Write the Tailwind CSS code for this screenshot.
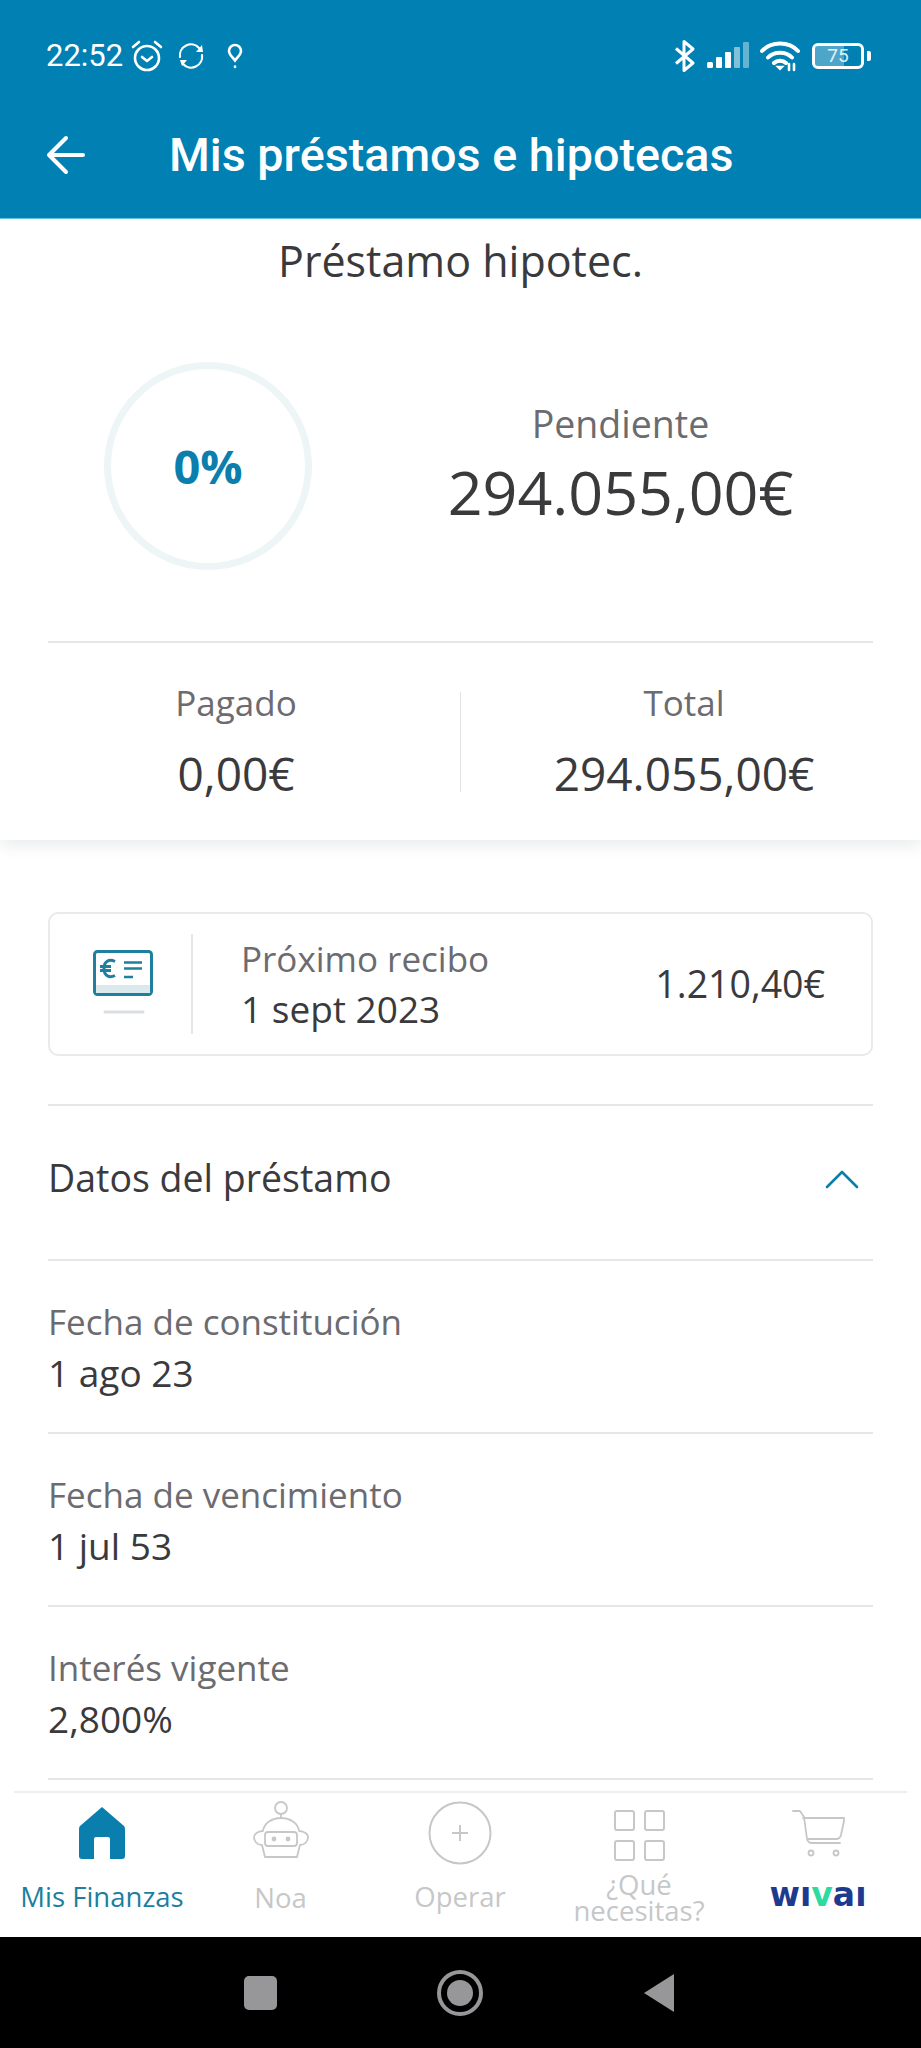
<!DOCTYPE html>
<html lang="es">
<head>
<meta charset="UTF-8">
<meta name="viewport" content="width=device-width, initial-scale=1.0">
<title>Mis préstamos e hipotecas</title>
<script src="https://cdn.jsdelivr.net/npm/@tailwindcss/browser@4"></script>
</head>
<body class="bg-white">
<div class="w-[921px] h-[2048px] flex flex-col overflow-hidden font-['Open_Sans',sans-serif] text-[#3a3a3c]">

  <!-- status bar + title -->
  <header class="h-[219px] shrink-0 bg-[#0080b3] text-white font-['Roboto',sans-serif] border-b border-[#5fc3dc]">
    <div class="h-[112px] pl-[46px] pr-[50px] flex items-center justify-between">
      <div class="flex items-center">
        <span class="text-[31px] w-[84px]">22:52</span>
        <svg class="w-[34px] h-[34px]" viewBox="0 0 34 34" fill="none" stroke="white" stroke-width="2.6" stroke-linecap="round" stroke-linejoin="round"><circle cx="17" cy="19" r="12"/><path d="M12 18l5 4 5-4M3 8l6-5M31 8l-6-5"/></svg>
        <svg class="w-[28px] h-[28px] ml-[13px]" viewBox="0 0 28 28" fill="none" stroke="white" stroke-width="2.2" stroke-linecap="round"><path d="M3 15A11 11 0 0 1 22 6M25 13a11 11 0 0 1-19 9"/><path d="M19 10l7 0-1-7zM3 18l7 0-5 6z" fill="white" stroke="none"/></svg>
        <svg class="w-[18px] h-[26px] ml-[21px]" viewBox="0 0 18 26" fill="none" stroke="white" stroke-width="2.6" stroke-linecap="round"><path d="M9 17.500C6 13.500 3 11.500 3 8a6 6 0 0 1 12 0c0 3.500-3 5.500-6 9.500z"/><path d="M9 23.500v.5"/></svg>
      </div>
      <div class="flex items-center">
        <svg class="w-[22px] h-[34px]" viewBox="0 0 22 34" fill="none" stroke="white" stroke-width="3" stroke-linejoin="round"><path d="M2 9.500 19 24 10 31.500V2.500L19 10 2 24.500"/></svg>
        <svg class="w-[42px] h-[28px] ml-[11px]" viewBox="0 0 42 28" fill="white"><rect x="0" y="20" width="6" height="6" rx="1.500"/><rect x="9" y="15" width="6" height="11" rx="1"/><rect x="18" y="10" width="6" height="16" rx="1"/><rect x="27" y="5" width="6" height="21" rx="1" fill-opacity=".5"/><rect x="36" y="0" width="6" height="26" rx="1" fill-opacity=".4"/></svg>
        <svg class="w-[40px] h-[32px] ml-[11px]" viewBox="0 0 40 32" fill="none" stroke="white" stroke-width="4" stroke-linecap="round"><path d="M2 11C11 1 29 1 38 11M8 17.500C14 11 26 11 32 17.500M14 23c3-3 9-3 12 0"/><path d="M20 29.500l-3-3h6z" fill="white" stroke-width="1.500"/><path d="M29 24v6M34 24v6" stroke-width="2.600"/></svg>
        <div class="relative w-[52px] h-[26px] ml-[12px] border-[3px] border-white rounded-[6px] overflow-hidden">
          <div class="h-full w-[62%] bg-white/30"></div>
          <span class="absolute inset-0 flex items-center justify-center text-[19px] text-white/85">75</span>
        </div>
        <div class="w-[4px] h-[10px] ml-[3px] bg-white rounded-r-[2px]"></div>
      </div>
    </div>
    <div class="h-[106px] pl-[46px] pt-[21px] flex items-start">
      <svg class="w-[40px] h-[40px] mt-[2px]" viewBox="0 0 40 40" fill="none" stroke="white" stroke-width="4" stroke-linecap="round" stroke-linejoin="round"><path d="M37 20H3M20 3 3 20l17 17"/></svg>
      <h1 class="ml-[83px] text-[46.700px] leading-[44px] font-medium whitespace-nowrap">Mis préstamos e hipotecas</h1>
    </div>
  </header>

  <main class="flex-1 min-h-0 overflow-hidden flex flex-col">
    <!-- summary card -->
    <section class="h-[621px] shrink-0 bg-white px-[48px] shadow-[0_6px_14px_rgba(60,80,90,0.10)] relative z-10">
      <h2 class="text-center text-[43px] leading-[54px] pt-[15px] h-[69px]">Préstamo hipotec.</h2>
      <div class="h-[355px] flex border-b-2 border-[#e4e7e9]">
        <div class="w-[320px] flex pl-[56px] pt-[74px]">
          <div class="w-[208px] h-[208px] rounded-full border-[7px] border-[#eef5f7] flex items-center justify-center text-[#0a7fae] font-bold text-[47px]">0%</div>
        </div>
        <div class="flex-1 flex flex-col items-center pt-[112px]">
          <span class="text-[37.500px] leading-[48px] text-[#6b6b70]">Pendiente</span>
          <span class="text-[61px] leading-[84px] mt-[2px]">294.055,00€</span>
        </div>
      </div>
      <div class="flex items-center h-[197px]">
        <div class="w-[412px] pr-[36px] flex flex-col items-center">
          <span class="text-[35px] leading-[46px] text-[#6b6b70]">Pagado</span>
          <span class="text-[46px] leading-[60px] mt-[17px]">0,00€</span>
        </div>
        <div class="w-px h-[100px] bg-[#dfe3e5]"></div>
        <div class="flex-1 pl-[34px] flex flex-col items-center">
          <span class="text-[35px] leading-[46px] text-[#6b6b70]">Total</span>
          <span class="text-[46px] leading-[60px] mt-[17px]">294.055,00€</span>
        </div>
      </div>
    </section>

    <section class="px-[48px] pt-[72px]">
      <!-- next payment -->
      <div class="h-[144px] border-2 border-[#e8eaec] rounded-[10px] flex items-center">
        <div class="w-[143px] h-[100px] flex justify-center items-start border-r-2 border-[#e4e7e9] shrink-0">
          <svg class="w-[60px] h-[80px] mt-[16px] ml-[4px]" viewBox="0 0 60 80" fill="none">
            <rect x="1.500" y="1.500" width="57" height="43" rx="3" fill="white" stroke="#1f7f9f" stroke-width="3"/>
            <rect x="3" y="35" width="54" height="8" fill="#dbe9ec"/>
            <path d="M22 11.500c-6-3-11 0-11 7s5 10 11 7M7 16.500h11M7 20.500h11" stroke="#1f7f9f" stroke-width="3"/>
            <path d="M31 12.500h18M31 18.500h18M31 27h9" stroke="#1f7f9f" stroke-width="2.500"/>
            <path d="M12 62h38" stroke="#dcdfe1" stroke-width="3" stroke-linecap="round"/>
          </svg>
        </div>
        <div class="pl-[48px] flex-1">
          <p class="text-[35px] leading-[46px] text-[#6b6b70]">Próximo recibo</p>
          <p class="text-[37px] leading-[48px] mt-[3px]">1 sept 2023</p>
        </div>
        <span class="text-[37.500px] pr-[46px]">1.210,40€</span>
      </div>

      <div class="mt-[48px] h-[157px] pb-[8px] border-y-2 border-[#e4e7e9] flex items-center justify-between">
        <span class="text-[37.500px]">Datos del préstamo</span>
        <svg class="w-[34px] h-[20px] mr-[14px]" viewBox="0 0 34 20" fill="none" stroke="#0a7fae" stroke-width="2.600" stroke-linecap="round" stroke-linejoin="round"><path d="M2 18 17 3l15 15"/></svg>
      </div>

      <div class="h-[173px] border-b-2 border-[#e4e7e9] pt-[38px]">
        <p class="text-[35px] leading-[46px] text-[#6b6b70]">Fecha de constitución</p>
        <p class="text-[37px] leading-[48px] mt-[4px]">1 ago 23</p>
      </div>
      <div class="h-[173px] border-b-2 border-[#e4e7e9] pt-[38px]">
        <p class="text-[35px] leading-[46px] text-[#6b6b70]">Fecha de vencimiento</p>
        <p class="text-[37px] leading-[48px] mt-[4px]">1 jul 53</p>
      </div>
      <div class="h-[173px] border-b-2 border-[#e4e7e9] pt-[38px]">
        <p class="text-[35px] leading-[46px] text-[#6b6b70]">Interés vigente</p>
        <p class="text-[37px] leading-[48px] mt-[4px]">2,800%</p>
      </div>
    </section>
  </main>

  <!-- bottom nav -->
  <nav class="h-[146px] shrink-0 mx-[14px] border-t-2 border-[#eceeef] flex bg-white text-[#c6c7c9] text-[27.500px] leading-[31px]">
    <div class="w-[176px] flex flex-col items-center pt-[12px]">
      <svg class="w-[46px] h-[52px] mt-[2px]" viewBox="0 0 46 52" fill="#0a7fae"><path d="M23 0 45 19q1 1 1 3v27q0 3-3 3H31V32q0-2-2-2H17q-2 0-2 2v20H3q-3 0-3-3V22q0-2 1-3z"/></svg>
      <span class="mt-[22px] text-[#1b7f9f]">Mis Finanzas</span>
    </div>
    <div class="w-[181px] flex flex-col items-center pt-[8px]">
      <svg class="w-[60px] h-[60px]" viewBox="0 0 60 60" fill="none" stroke="#c6c7c9" stroke-width="1.800" stroke-linejoin="round"><circle cx="30" cy="7" r="6"/><path d="M30 13v5M12 30c1-8 9-13 18-13s17 5 18 13c3 0 9 2 9 6s-3 8-8 8l-3 12H14l-3-12c-5 0-8-4-8-8s6-6 9-6z"/><rect x="14" y="31" width="32" height="14" rx="3"/><circle cx="23" cy="38" r="1.500" fill="#c6c7c9"/><circle cx="37" cy="38" r="1.500" fill="#c6c7c9"/></svg>
      <span class="mt-[21px]">Noa</span>
    </div>
    <div class="w-[178px] flex flex-col items-center pt-[8px]">
      <svg class="w-[64px] h-[64px]" viewBox="0 0 64 64" fill="none" stroke="#c6c7c9" stroke-width="2"><circle cx="32" cy="32" r="30.500"/><path d="M32 24v16M24 32h16"/></svg>
      <span class="mt-[16px]">Operar</span>
    </div>
    <div class="w-[180px] flex flex-col items-center pt-[17px]">
      <div class="grid grid-cols-2 gap-[9px]">
        <div class="w-[21px] h-[21px] border-2 border-[#c6c7c9] rounded-[3px]"></div>
        <div class="w-[21px] h-[21px] border-2 border-[#c6c7c9] rounded-[3px]"></div>
        <div class="w-[21px] h-[21px] border-2 border-[#c6c7c9] rounded-[3px]"></div>
        <div class="w-[21px] h-[21px] border-2 border-[#c6c7c9] rounded-[3px]"></div>
      </div>
      <span class="mt-[11px] text-center leading-[26px]">¿Qué<br>necesitas?</span>
    </div>
    <div class="flex-1 flex flex-col items-center pt-[17px]">
      <svg class="w-[54px] h-[48px] ml-[2px]" viewBox="0 0 54 48" fill="none" stroke="#c6c7c9" stroke-width="1.800" stroke-linecap="round" stroke-linejoin="round"><path d="M1 1h7l4 6 3 22q1 4 5 4h28M11 8h41v3l-3 14q-1 4-5 4H15"/><circle cx="19" cy="43" r="2.500"/><circle cx="44" cy="43" r="2.500"/></svg>
      <div class="mt-[24px] h-[26px] flex items-end font-['DejaVu_Sans',sans-serif] font-bold text-[33px] leading-[26px] text-[#1d3a8f]">wı<span class="text-[#2ddba0]">v</span>aı</div>
    </div>
  </nav>

  <!-- android nav -->
  <footer class="h-[111px] shrink-0 bg-black flex items-center justify-center pr-[2px]">
    <div class="w-[33px] h-[34px] rounded-[5px] bg-[#979799]"></div>
    <div class="ml-[160px] w-[46px] h-[46px] rounded-full border-[4px] border-[#979799] flex items-center justify-center">
      <div class="w-[26px] h-[26px] rounded-full bg-[#979799]"></div>
    </div>
    <svg class="ml-[160px] w-[32px] h-[40px]" viewBox="0 0 32 40" fill="#979799"><path d="M31 1v38L1 20z"/></svg>
  </footer>
</div>
</body>
</html>
